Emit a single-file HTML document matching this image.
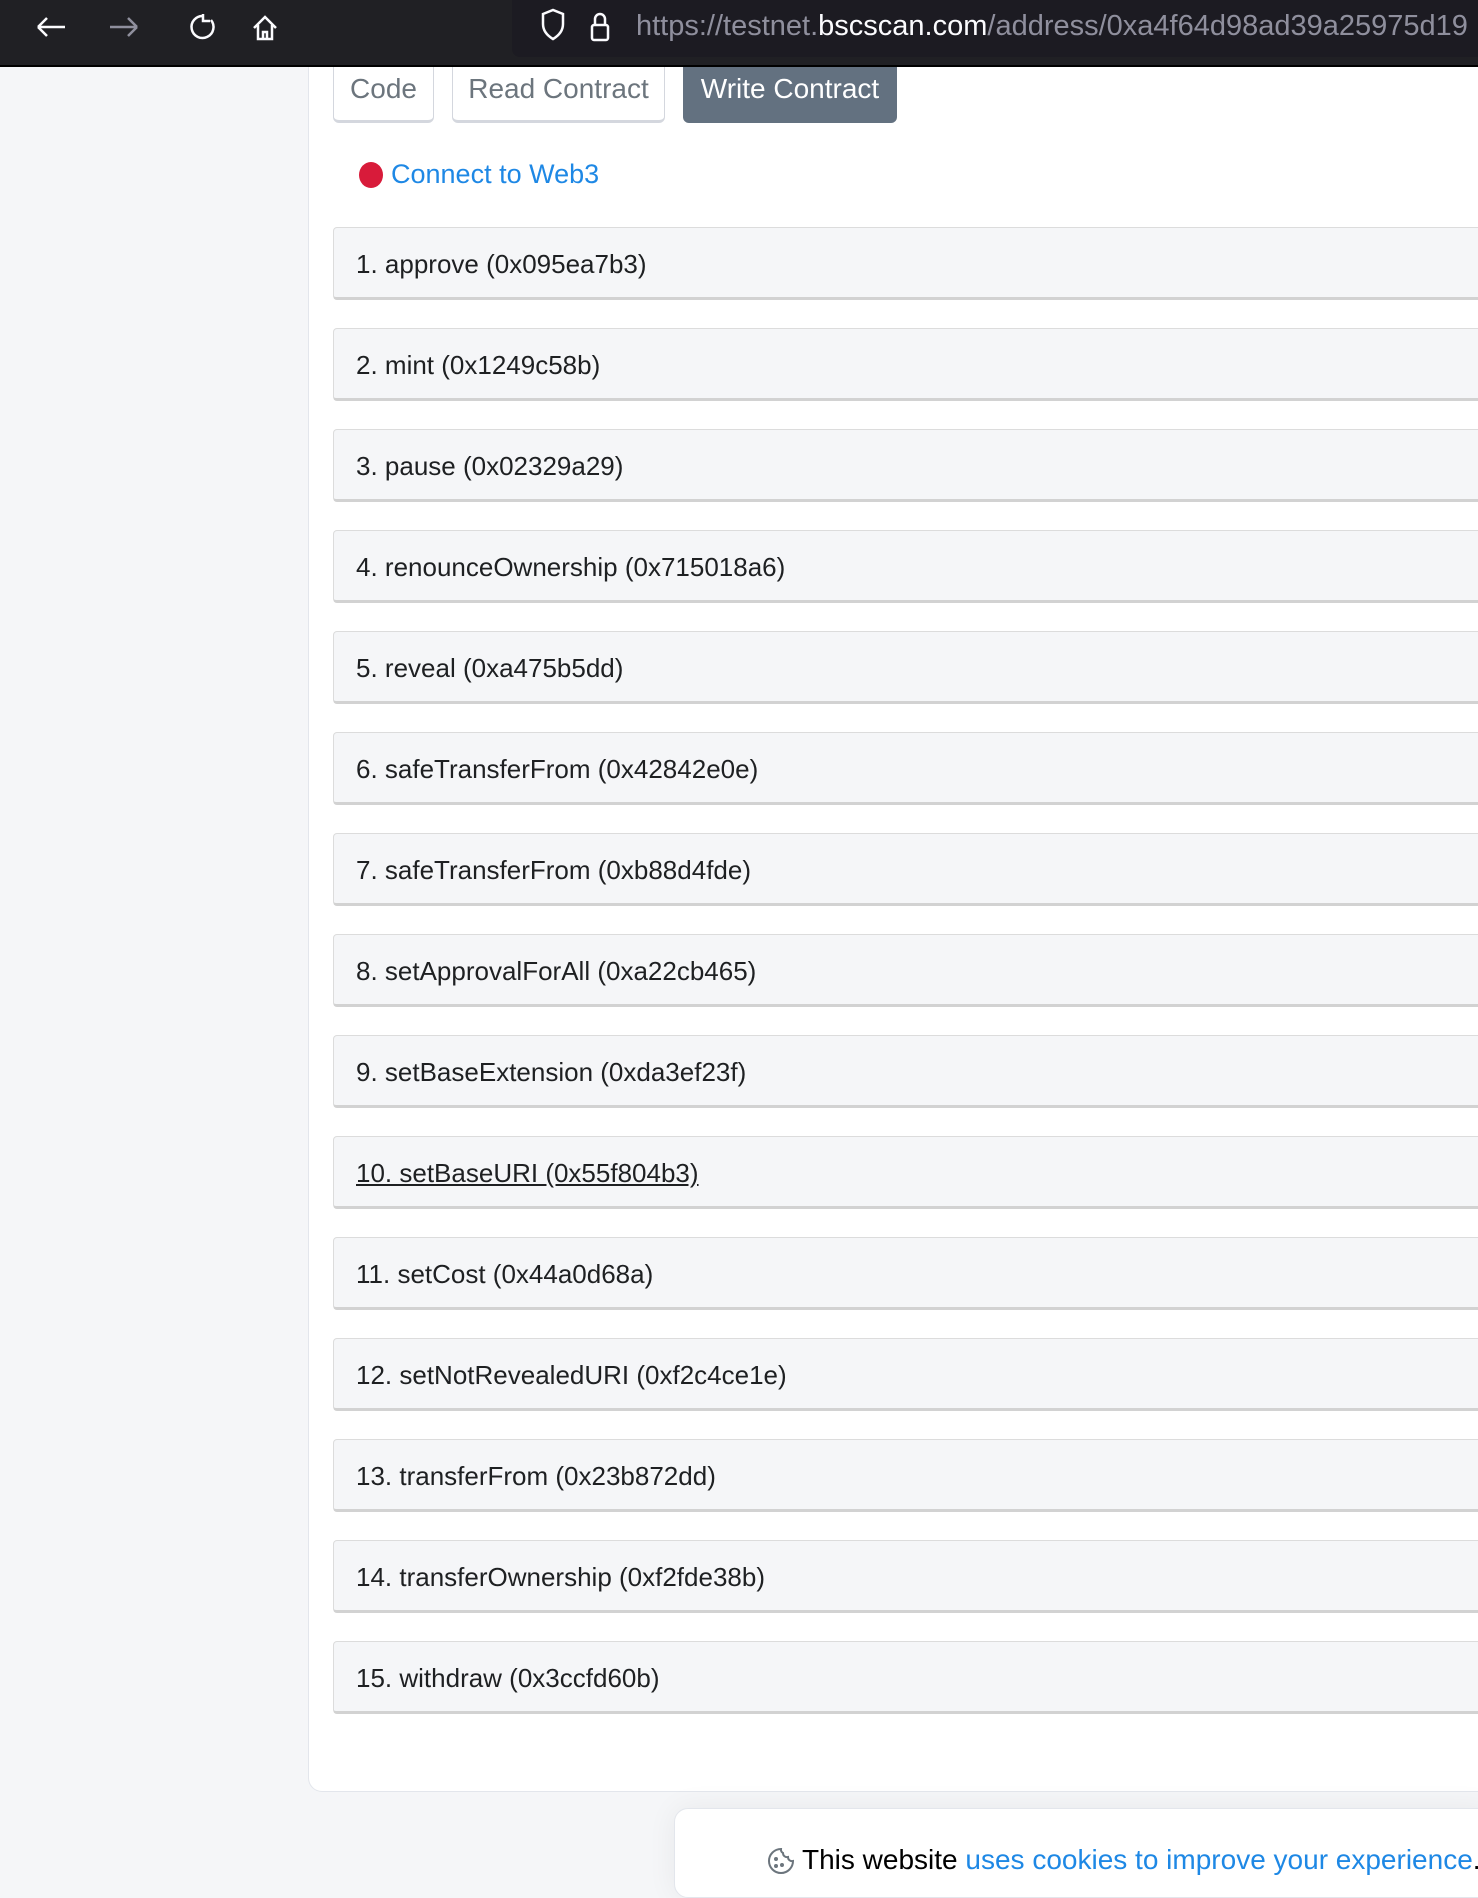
<!DOCTYPE html>
<html><head><meta charset="utf-8"><style>
*{box-sizing:border-box;margin:0;padding:0}
body{width:1478px;height:1880px;overflow:hidden;background:#f5f6f8;font-family:"Liberation Sans",Arial,sans-serif;position:relative}
.bar{position:absolute;left:0;top:0;width:1478px;height:67px;background:#202024;border-bottom:2px solid #000}
.url{position:absolute;left:512px;top:0;width:970px;height:57px;background:#1c1b22;border-radius:0 0 0 8px}
.url span.t{position:absolute;left:124px;top:10px;font-size:29px;color:#8f8f9d;white-space:nowrap}
.url b{color:#fbfbfe;font-weight:normal}
.card{position:absolute;left:308px;top:67px;width:1200px;height:1725px;background:#fff;border-left:1px solid #e3e6ec;border-bottom:1px solid #e3e6ec;border-radius:0 0 0 14px}
.btn{position:absolute;top:67px;height:56px;border:1px solid #d4d7de;border-bottom-width:3px;border-top:none;border-radius:0 0 6px 6px;font-size:28px;color:#6c757d;padding-top:6px;text-align:center}
.row{position:absolute;left:333px;width:1200px;height:73px;background:#f5f6f8;border:1px solid #dcdcdc;border-bottom:3px solid #d2d2d2;border-radius:4px;font-size:26px;color:#1e2022;padding:21px 0 0 22px}
.cookie{position:absolute;left:674px;top:1808px;width:820px;height:90px;background:#fff;border:1px solid #e3e6ec;border-radius:14px;box-shadow:0 0 30px rgba(0,0,0,0.06)}
</style></head><body>
<div class="bar">
<svg width="420" height="57" style="position:absolute;left:0;top:0" fill="none" stroke="#fbfbfe" stroke-width="2.5">
<path d="M38 27h27M38 27l9-9M38 27l9 9"/>
<path d="M110 27h27M137 27l-9-9M137 27l-9 9" stroke="#8f8f9d"/>
<path d="M203 16a11 11 0 1 0 8 4M203 14v7h7"/>
<path d="M254 28l11-11 11 11M258 25v14h14V25M263 39v-7h4v7"/>
</svg>
<div class="url">
<svg width="120" height="57" style="position:absolute;left:0;top:0" fill="none" stroke="#fbfbfe" stroke-width="2.5">
<path d="M31 14l10-4 10 4v10c0 7-5 12-10 15-5-3-10-8-10-15z"/>
<rect x="80" y="25" width="16" height="15" rx="2"/><path d="M83 25v-6a5 5 0 0 1 10 0v6"/>
</svg>
<span class="t">https://testnet.<b>bscscan.com</b>/address/0xa4f64d98ad39a25975d19</span>
</div>
</div>
<div class="card"></div>
<div class="btn" style="left:333px;width:101px">Code</div>
<div class="btn" style="left:452px;width:213px">Read Contract</div>
<div class="btn" style="left:683px;width:214px;background:#637180;border-color:#637180;color:#fff">Write Contract</div>
<div style="position:absolute;left:359px;top:162px;width:24px;height:26px;border-radius:50%;background:#d81b3a"></div>
<div style="position:absolute;left:391px;top:159px;font-size:27px;color:#1e88e5">Connect to Web3</div>
<div class="row" style="top:227px">1. approve (0x095ea7b3)</div>
<div class="row" style="top:328px">2. mint (0x1249c58b)</div>
<div class="row" style="top:429px">3. pause (0x02329a29)</div>
<div class="row" style="top:530px">4. renounceOwnership (0x715018a6)</div>
<div class="row" style="top:631px">5. reveal (0xa475b5dd)</div>
<div class="row" style="top:732px">6. safeTransferFrom (0x42842e0e)</div>
<div class="row" style="top:833px">7. safeTransferFrom (0xb88d4fde)</div>
<div class="row" style="top:934px">8. setApprovalForAll (0xa22cb465)</div>
<div class="row" style="top:1035px">9. setBaseExtension (0xda3ef23f)</div>
<div class="row" style="top:1136px;text-decoration:underline">10. setBaseURI (0x55f804b3)</div>
<div class="row" style="top:1237px">11. setCost (0x44a0d68a)</div>
<div class="row" style="top:1338px">12. setNotRevealedURI (0xf2c4ce1e)</div>
<div class="row" style="top:1439px">13. transferFrom (0x23b872dd)</div>
<div class="row" style="top:1540px">14. transferOwnership (0xf2fde38b)</div>
<div class="row" style="top:1641px">15. withdraw (0x3ccfd60b)</div>
<div class="cookie">
<svg width="28" height="28" style="position:absolute;left:92px;top:38px" fill="none" stroke="#6c757d" stroke-width="2"><path d="M14 2a12 12 0 1 0 12 12 4 4 0 0 1-5-4 4 4 0 0 1-5-4 4 4 0 0 1-2-4z"/><circle cx="9" cy="12" r="1"/><circle cx="15" cy="18" r="1"/><circle cx="9" cy="19" r="1"/></svg>
<div style="position:absolute;left:127px;top:35px;font-size:28px;color:#000;white-space:nowrap">This website <span style="color:#1e88e5">uses cookies to improve your experience</span>.</div>
</div>
</body></html>
